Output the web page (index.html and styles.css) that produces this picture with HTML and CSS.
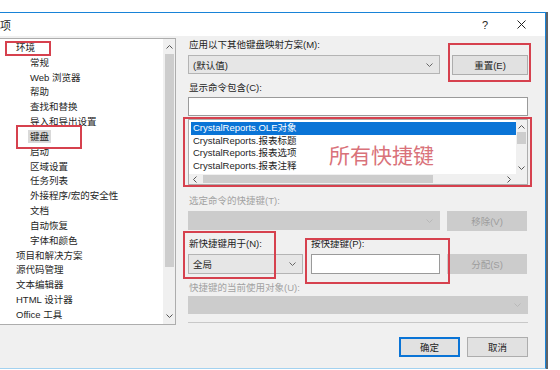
FILE: index.html
```html
<!DOCTYPE html>
<html lang="zh-cn">

<head>
    <meta charset="UTF-8">
    <title>选项</title>
    <link rel="stylesheet" href="styles.css">
</head>

<body>
    <div class="screen">
        <div class="dialog">
            <!-- 标题栏 -->
            <div class="titlebar">
                <span class="title">选项</span>
                <span class="help">?</span>
                <svg class="close" width="9" height="9" viewBox="0 0 9 9">
                    <path d="M0.5 0.5 L8.5 8.5 M8.5 0.5 L0.5 8.5" stroke="#222" stroke-width="1" fill="none"/>
                </svg>
            </div>

            <div class="body">
                <!-- 左侧树 -->
                <div class="tree">
                    <div class="tree-items">
                        <div class="node">环境</div>
                        <div class="node child">常规</div>
                        <div class="node child">Web 浏览器</div>
                        <div class="node child">帮助</div>
                        <div class="node child">查找和替换</div>
                        <div class="node child">导入和导出设置</div>
                        <div class="node child"><span class="selected">键盘</span></div>
                        <div class="node child">启动</div>
                        <div class="node child">区域设置</div>
                        <div class="node child">任务列表</div>
                        <div class="node child">外接程序/宏的安全性</div>
                        <div class="node child">文档</div>
                        <div class="node child">自动恢复</div>
                        <div class="node child">字体和颜色</div>
                        <div class="node">项目和解决方案</div>
                        <div class="node">源代码管理</div>
                        <div class="node">文本编辑器</div>
                        <div class="node">HTML 设计器</div>
                        <div class="node">Office 工具</div>
                    </div>
                    <div class="vscroll">
                        <svg class="arrow" width="7" height="4" viewBox="0 0 7 4"><path d="M0.5 3.5 L3.5 0.5 L6.5 3.5" stroke="#555" fill="none"/></svg>
                        <div class="thumb"></div>
                        <svg class="arrow" width="7" height="4" viewBox="0 0 7 4"><path d="M0.5 0.5 L3.5 3.5 L6.5 0.5" stroke="#555" fill="none"/></svg>
                    </div>
                </div>

                <!-- 右侧内容 -->
                <div class="panel">
                    <div class="lbl">应用以下其他键盘映射方案(M):</div>
                    <div class="row">
                        <div class="combo combo-wide">
                            <span>(默认值)</span>
                            <svg class="chev" width="7" height="4" viewBox="0 0 7 4"><path d="M0.5 0.5 L3.5 3.5 L6.5 0.5" stroke="#666" fill="none"/></svg>
                        </div>
                        <button class="btn btn-reset">重置(E)</button>
                    </div>

                    <div class="lbl lbl-gap">显示命令包含(C):</div>
                    <div class="textbox textbox-full"></div>

                    <div class="cmdlist">
                        <div class="cmd-items">
                            <div class="cmd active">CrystalReports.OLE对象</div>
                            <div class="cmd">CrystalReports.报表标题</div>
                            <div class="cmd">CrystalReports.报表选项</div>
                            <div class="cmd">CrystalReports.报表注释</div>
                        </div>
                        <div class="cmd-vscroll">
                            <svg width="7" height="4" viewBox="0 0 7 4"><path d="M0.5 3.5 L3.5 0.5 L6.5 3.5" stroke="#555" fill="none"/></svg>
                            <div class="cmd-vthumb"></div>
                            <svg width="7" height="4" viewBox="0 0 7 4"><path d="M0.5 0.5 L3.5 3.5 L6.5 0.5" stroke="#555" fill="none"/></svg>
                        </div>
                        <div class="cmd-hscroll">
                            <svg width="4" height="7" viewBox="0 0 4 7"><path d="M3.5 0.5 L0.5 3.5 L3.5 6.5" stroke="#555" fill="none"/></svg>
                            <div class="cmd-hthumb"></div>
                            <svg width="4" height="7" viewBox="0 0 4 7"><path d="M0.5 0.5 L3.5 3.5 L0.5 6.5" stroke="#555" fill="none"/></svg>
                        </div>
                        <div class="cmd-corner"></div>
                    </div>

                    <div class="lbl lbl-off lbl-gap2">选定命令的快捷键(T):</div>
                    <div class="row">
                        <div class="combo combo-wide off">
                            <svg class="chev" width="7" height="4" viewBox="0 0 7 4"><path d="M0.5 0.5 L3.5 3.5 L6.5 0.5" stroke="#b8b8b8" fill="none"/></svg>
                        </div>
                        <button class="btn off">移除(V)</button>
                    </div>

                    <div class="row row-assign">
                        <div class="col-scope">
                            <div class="lbl">新快捷键用于(N):</div>
                            <div class="combo combo-scope">
                                <span>全局</span>
                                <svg class="chev" width="7" height="4" viewBox="0 0 7 4"><path d="M0.5 0.5 L3.5 3.5 L6.5 0.5" stroke="#666" fill="none"/></svg>
                            </div>
                        </div>
                        <div class="col-key">
                            <div class="lbl">按快捷键(P):</div>
                            <div class="textbox"></div>
                        </div>
                        <button class="btn off">分配(S)</button>
                    </div>

                    <div class="lbl lbl-off lbl-gap3">快捷键的当前使用对象(U):</div>
                    <div class="combo combo-full off">
                        <svg class="chev" width="7" height="4" viewBox="0 0 7 4"><path d="M0.5 0.5 L3.5 3.5 L6.5 0.5" stroke="#b8b8b8" fill="none"/></svg>
                    </div>
                    <div class="sep"></div>
                </div>
            </div>

            <!-- 底部按钮 -->
            <div class="footer">
                <button class="btn btn-foot btn-ok">确定</button>
                <button class="btn btn-foot">取消</button>
            </div>
        </div>

        <!-- 红色标注 -->
        <div class="mark mark-env"></div>
        <div class="mark mark-key"></div>
        <div class="mark mark-reset"></div>
        <div class="mark mark-list"></div>
        <div class="mark mark-scope"></div>
        <div class="mark mark-press"></div>
        <div class="note">所有快捷键</div>
    </div>
</body>

</html>
```

FILE: styles.css
```css
/* 页面整体 */
body {
    margin: 0;
    font-family: "Liberation Sans", "Noto Sans CJK SC", sans-serif;
    font-size: 9.5px;
    color: #1e1e1e;
    background: #fff;
}

.screen {
    position: relative;
    width: 560px;
    height: 370px;
    padding-top: 12px;
    box-sizing: border-box;
    overflow: hidden;
}

/* 对话框 */
.dialog {
    width: 546px;
    height: 357px;
    box-sizing: border-box;
    border-top: 1px solid #1883d7;
    border-right: 1px solid #1883d7;
    border-bottom: 1px solid #a3d2f0;
    background: #f0f0f0;
    box-shadow: 2px 0 0 #5f6368;
    display: flex;
    flex-direction: column;
}

.titlebar {
    height: 23px;
    background: #fff;
    display: flex;
    align-items: center;
    flex-shrink: 0;
}

.title {
    margin-left: -11px;
    font-size: 11px;
}

.help {
    margin-left: auto;
    font-size: 11px;
}

.close {
    margin-left: 29px;
    margin-right: 19px;
}

.body {
    display: flex;
    height: 289px;
    padding-top: 2px;
    padding-right: 17px;
    box-sizing: border-box;
    flex-shrink: 0;
}

/* 左侧树 */
.tree {
    width: 177px;
    height: 287px;
    margin-left: -1px;
    box-sizing: border-box;
    border: 1px solid #adadad;
    background: #fff;
    display: flex;
}

.tree-items {
    flex: 1;
    padding-top: 2px;
}

.node {
    height: 14.83px;
    line-height: 14.83px;
    padding-left: 16px;
    white-space: nowrap;
}

.node.child {
    padding-left: 30px;
}

.selected {
    background: #d9d9d9;
    padding: 1px 2px;
    margin-left: -2px;
}

.vscroll {
    width: 12px;
    background: #f0f0f0;
    display: flex;
    flex-direction: column;
    align-items: center;
}

.vscroll .arrow {
    margin: 6px 0 5px;
}

.vscroll .thumb {
    width: 9px;
    height: 213px;
    background: #cdcdcd;
}

.vscroll .arrow:last-child {
    margin-top: auto;
    margin-bottom: 6px;
}

/* 右侧内容 */
.panel {
    width: 340px;
    margin-left: 12px;
    display: flex;
    flex-direction: column;
}

.lbl {
    height: 14px;
    line-height: 14px;
    padding-left: 1px;
    white-space: nowrap;
}

.lbl-off {
    color: #a2a2a2;
}

.lbl-gap {
    margin-top: 6px;
}

.lbl-gap2 {
    margin-top: 9px;
}

.lbl-gap3 {
    margin-top: 7px;
}

.row {
    display: flex;
    align-items: flex-start;
    margin-top: 3px;
}

.combo {
    height: 19px;
    box-sizing: border-box;
    border: 1px solid #b4b4b4;
    background: #e6e6e6;
    display: flex;
    align-items: center;
    padding: 0 6px 0 4px;
}

.combo .chev {
    margin-left: auto;
}

.combo-wide {
    width: 252px;
}

.combo.off {
    background: #cccccc;
    border-color: #cccccc;
}

.combo-scope {
    width: 115px;
    height: 20px;
    margin-top: 3px;
}

.combo-full {
    width: 340px;
    height: 18px;
    margin-top: 1px;
}

.btn {
    font-family: inherit;
    font-size: 9.5px;
    color: #1e1e1e;
    height: 20px;
    width: 80px;
    margin-left: auto;
    margin-right: 1px;
    box-sizing: border-box;
    border: 1px solid #adadad;
    background: #e1e1e1;
    padding: 0;
}

.btn-reset {
    width: 76px;
    margin-right: 0;
}

.btn.off {
    background: #cccccc;
    border-color: #cccccc;
    color: #9c9c9c;
}

.textbox {
    height: 19px;
    box-sizing: border-box;
    border: 1px solid #9a9a9a;
    background: #fff;
}

.textbox-full {
    width: 340px;
    margin-top: 2px;
}

/* 命令列表 */
.cmdlist {
    margin-top: 3px;
    width: 340px;
    height: 66px;
    box-sizing: border-box;
    border: 1px solid #adadad;
    background: #fff;
    display: grid;
    grid-template-columns: 1fr 11px;
    grid-template-rows: 1fr 10px;
}

.cmd-items {
    padding: 2px 0 0 2px;
    overflow: hidden;
}

.cmd {
    height: 12.6px;
    line-height: 12.6px;
    padding-left: 2px;
    white-space: nowrap;
}

.cmd.active {
    background: #0a74d6;
    color: #fff;
}

.cmd-vscroll {
    background: #f0f0f0;
    display: flex;
    flex-direction: column;
    align-items: center;
    padding: 5px 0 4px;
}

.cmd-vthumb {
    width: 9px;
    height: 12px;
    margin-top: 3px;
    background: #cdcdcd;
}

.cmd-vscroll svg:last-child {
    margin-top: auto;
}

.cmd-hscroll {
    background: #f0f0f0;
    display: flex;
    align-items: center;
    padding: 0 5px 0 4px;
}

.cmd-hthumb {
    width: 230px;
    height: 8px;
    margin-left: 6px;
    background: #cdcdcd;
}

.cmd-hscroll svg:last-child {
    margin-left: auto;
}

.cmd-corner {
    background: #f0f0f0;
}

/* 分配行 */
.row-assign {
    margin-top: 6px;
    align-items: flex-end;
}

.col-scope {
    width: 115px;
}

.col-key {
    width: 129px;
    margin-left: 8px;
}

.col-key .lbl {
    padding-left: 0;
}

.col-key .textbox {
    margin-top: 3px;
    height: 20px;
}

.sep {
    margin-top: 8px;
    height: 1px;
    background: #c8c8c8;
}

/* 底部按钮 */
.footer {
    display: flex;
    justify-content: flex-end;
    gap: 7px;
    padding-top: 12px;
    padding-right: 17px;
}

.btn-foot {
    width: 61px;
    margin: 0;
}

.btn-ok {
    border: 2px solid #0a74d6;
}

/* 红色标注 */
.mark {
    position: absolute;
    box-sizing: border-box;
    border: 2px solid #d6414e;
}

.mark-env {
    left: 5px;
    top: 41px;
    width: 46px;
    height: 15px;
}

.mark-key {
    left: 16px;
    top: 125px;
    width: 66px;
    height: 24px;
}

.mark-reset {
    left: 448px;
    top: 43px;
    width: 83px;
    height: 39px;
}

.mark-list {
    left: 183px;
    top: 117px;
    width: 349px;
    height: 70px;
}

.mark-scope {
    left: 183px;
    top: 231px;
    width: 93px;
    height: 48px;
}

.mark-press {
    left: 305px;
    top: 238px;
    width: 145px;
    height: 46px;
}

.note {
    position: absolute;
    left: 329px;
    top: 144px;
    font-size: 21px;
    line-height: 24px;
    color: #d9727a;
}
```
